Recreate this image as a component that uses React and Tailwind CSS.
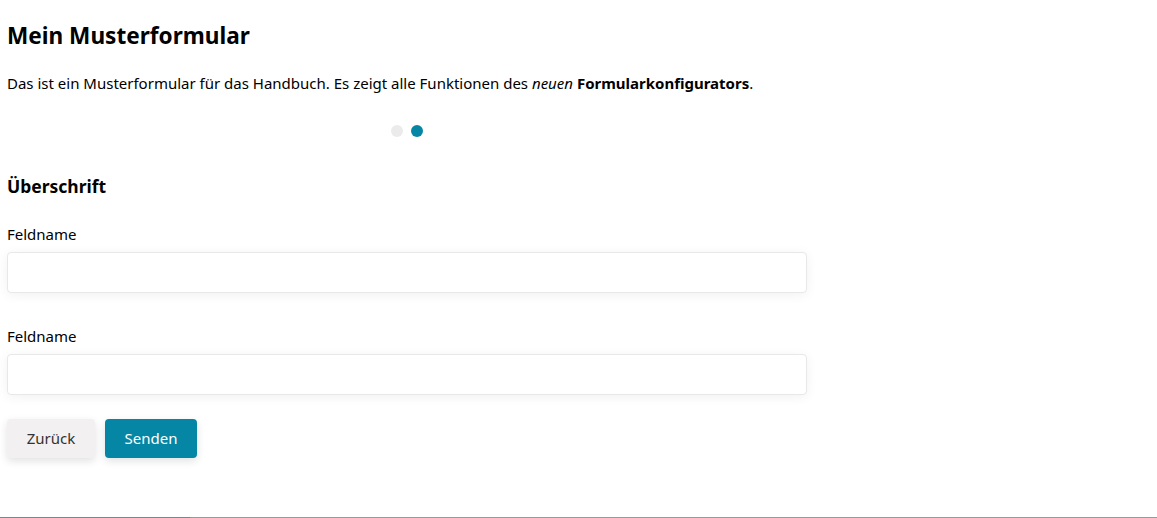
export default function App() {
  return (
    <div className="min-h-[518px] bg-white font-['Noto_Sans',sans-serif] text-black flex flex-col">
      <div className="flex-1 px-[7px] pt-[21px]">
        <h1 className="text-[22.6px] font-bold leading-[30px]">Mein Musterformular</h1>
        <p className="mt-[22px] text-[15px] leading-[20px]">
          Das ist ein Musterformular für das Handbuch. Es zeigt alle Funktionen des <em>neuen</em>{" "}
          <strong>Formularkonfigurators</strong>.
        </p>

        <div className="w-[800px]">
          <div className="flex justify-center gap-[8px] mt-[32px]">
            <span className="w-[12px] h-[12px] rounded-full bg-[#ebebeb]" />
            <span className="w-[12px] h-[12px] rounded-full bg-[#0686a5]" />
          </div>

          <h2 className="mt-[37px] text-[17.5px] font-bold leading-[24px]">Überschrift</h2>

          <div className="mt-[26px] flex flex-col">
            <label className="text-[15px] leading-[20px]">Feldname</label>
            <input className="mt-[8px] h-[41px] w-full rounded-[4px] border border-[#e8e8e8] bg-white shadow-[0_2px_12px_rgba(0,0,0,0.06)] outline-none" />
          </div>

          <div className="mt-[33px] flex flex-col">
            <label className="text-[15px] leading-[20px]">Feldname</label>
            <input className="mt-[8px] h-[41px] w-full rounded-[4px] border border-[#e8e8e8] bg-white shadow-[0_2px_12px_rgba(0,0,0,0.06)] outline-none" />
          </div>

          <div className="mt-[24px] flex gap-[10px]">
            <button className="h-[39px] w-[88px] rounded-[4px] bg-[#f2f0f0] text-[15px] text-[#333] shadow-[0_3px_8px_rgba(0,0,0,0.12)]">
              Zurück
            </button>
            <button className="h-[39px] w-[92px] rounded-[4px] bg-[#0686a5] text-[15px] text-white shadow-[0_3px_8px_rgba(0,0,0,0.12)]">
              Senden
            </button>
          </div>
        </div>
      </div>
      <div className="flex h-px">
        <div className="w-[190px] bg-[#78878f]" />
        <div className="flex-1 bg-[#999]" />
      </div>
    </div>
  );
}
